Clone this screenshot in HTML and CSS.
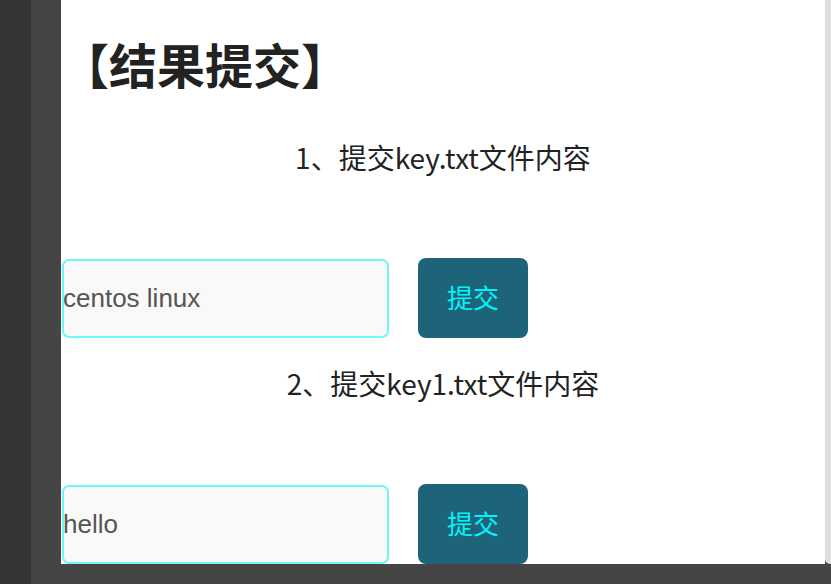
FILE: index.html
```html
<!DOCTYPE html>
<html lang="zh-CN">
<head>
<meta charset="utf-8">
<title>结果提交</title>
<link rel="stylesheet" href="styles.css">
</head>
<body>
<div class="shell">
  <div class="rail"></div>
  <div class="gutter"></div>
  <main class="page">
    <h1 class="title">【结果提交】</h1>
    <section class="task">
      <p class="task-label">1、提交key.txt文件内容</p>
      <form class="task-form">
        <input class="task-input" type="text" value="centos linux">
        <button class="task-btn" type="button">提交</button>
      </form>
    </section>
    <section class="task">
      <p class="task-label">2、提交key1.txt文件内容</p>
      <form class="task-form">
        <input class="task-input" type="text" value="hello">
        <button class="task-btn" type="button">提交</button>
      </form>
    </section>
  </main>
  <div class="scrollbar"></div>
</div>
</body>
</html>
```
FILE: styles.css
```css
html, body {
  margin: 0;
  padding: 0;
  height: 100%;
  overflow: hidden;
  background: #454545;
}
.shell {
  display: flex;
  height: 584px;
  align-items: flex-start;
}
.rail {
  width: 31px;
  height: 584px;
  background: #353535;
  flex: none;
}
.gutter {
  width: 30px;
  flex: none;
}
.page {
  width: 764px;
  height: 564px;
  background: #ffffff;
  flex: none;
  overflow: hidden;
  font-family: "Noto Sans CJK SC", "Noto Sans", sans-serif;
  color: #222;
}
.scrollbar {
  width: 6px;
  height: 564px;
  background: #dedede;
  border-bottom-left-radius: 5px;
  flex: none;
}
.title {
  margin: 0;
  height: 137px;
  box-sizing: border-box;
  padding: 33px 0 0 0;
  font-size: 48px;
  line-height: 60px;
  font-weight: 700;
  color: #222;
}
.task-label {
  margin: 0;
  text-align: center;
  font-size: 28px;
  line-height: 40px;
  color: #222;
}
.task-form {
  display: flex;
  align-items: flex-end;
  gap: 29px;
  margin: 81px 0 0 1px;
}
.task-input {
  box-sizing: border-box;
  width: 327px;
  height: 79px;
  margin: 0;
  padding: 0 0 0 0;
  text-indent: -1px;
  border: 2px solid #70f5fb;
  border-radius: 7px;
  background: #f9f9f9;
  font-family: "Liberation Sans", Arial, sans-serif;
  font-size: 26px;
  color: #555;
  outline: none;
}
.task-btn {
  width: 110px;
  height: 80px;
  border: none;
  border-radius: 8px;
  background: #1d6379;
  color: #00f4fa;
  font-family: "Noto Sans CJK SC", sans-serif;
  font-size: 26px;
  padding: 0 0 3px;
}
.task + .task .task-label {
  margin-top: 25px;
}
```
